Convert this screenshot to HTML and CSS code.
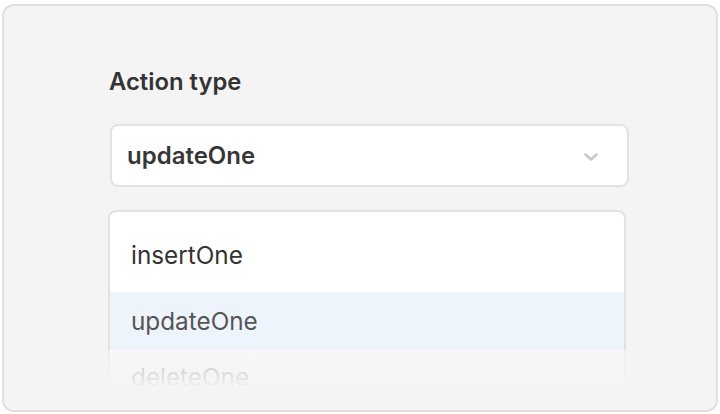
FILE: index.html
```html
<!DOCTYPE html>
<html>
<head>
<meta charset="utf-8">
<link rel="stylesheet" href="styles.css">
</head>
<body>
<div class="card">
  <div class="content">
    <div class="label">Action type</div>
    <div class="select">
      <span class="value">updateOne</span>
      <svg class="chevron" width="16" height="10" viewBox="0 0 16 10"><path d="M2.5 2.5 L8 7.5 L13.5 2.5" fill="none" stroke="#c9c9c9" stroke-width="2.6" stroke-linecap="round" stroke-linejoin="round"/></svg>
    </div>
    <div class="menu">
      <div class="option">insertOne</div>
      <div class="option active">updateOne</div>
      <div class="option">deleteOne</div>
    </div>
  </div>
  <div class="fade"></div>
</div>
</body>
</html>
```

FILE: styles.css
```css
html, body {
  margin: 0;
  padding: 0;
  background: #ffffff;
}
body {
  padding: 4px 2px 2px 2px;
  font-family: Inter, "Noto Sans", sans-serif;
}
.card {
  position: relative;
  box-sizing: border-box;
  width: 716px;
  height: 408px;
  background: #f4f4f4;
  border: 2px solid #e0e0e0;
  border-radius: 12px;
  overflow: hidden;
}
.content {
  padding: 62px 0 0 104px;
}
.label {
  font-size: 23.8px;
  font-weight: 600;
  color: #333333;
  line-height: 28px;
  margin-left: 1px;
}
.select {
  box-sizing: border-box;
  margin-top: 28px;
  margin-left: 2px;
  width: 519px;
  height: 63px;
  background: #ffffff;
  border: 2px solid #e2e2e2;
  border-radius: 8px;
  display: flex;
  align-items: center;
  justify-content: space-between;
  padding: 0 28px 0 15px;
}
.value {
  font-size: 24px;
  font-weight: 600;
  color: #363636;
}
.chevron {
  display: block;
  margin-top: 2px;
}
.menu {
  box-sizing: border-box;
  margin-top: 23px;
  width: 518px;
  background: #ffffff;
  border: 2px solid #e2e2e2;
  border-radius: 8px;
  padding-top: 14px;
  display: flex;
  flex-direction: column;
  gap: 8px;
}
.option {
  height: 58px;
  display: flex;
  align-items: center;
  padding-left: 21px;
  font-size: 24.3px;
  color: #333333;
}
.option.active {
  background: #eef4fb;
  color: #555555;
}
.option + .option.active + .option {
  margin-top: -10px;
}
.fade {
  position: absolute;
  left: 0;
  right: 0;
  top: 344px;
  bottom: 0;
  background: linear-gradient(to bottom, rgba(244,244,244,0.55) 0px, rgba(244,244,244,0.75) 6px, #f4f4f4 40px);
}
```
